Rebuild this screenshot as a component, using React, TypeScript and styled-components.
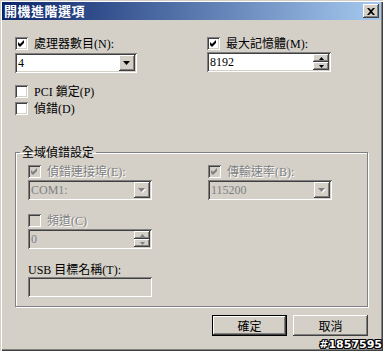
import React from 'react';
import styled, { createGlobalStyle } from 'styled-components';

const GlobalStyle = createGlobalStyle`
  html, body {
    margin: 0;
    padding: 0;
    background: #d4d0c8;
  }
  body {
    font-family: "Liberation Serif", "Noto Sans CJK TC", serif;
    font-size: 12px;
    color: #000;
  }
`;

const raised = `
  box-shadow: inset -1px -1px #404040, inset 1px 1px #fff, inset -2px -2px #808080, inset 2px 2px #d4d0c8;
`;

const sunken = `
  box-shadow: inset 1px 1px #808080, inset -1px -1px #fff, inset 2px 2px #404040, inset -2px -2px #d4d0c8;
`;

const Window = styled.div`
  position: relative;
  width: 383px;
  height: 351px;
  box-sizing: border-box;
  padding: 2px;
  background: #d4d0c8;
  box-shadow: inset 1px 1px #d4d0c8, inset 2px 2px #fff, inset -1px -1px #404040, inset -2px -2px #808080;
  display: flex;
  flex-direction: column;
`;

const TitleBar = styled.div`
  height: 18px;
  display: flex;
  align-items: center;
  justify-content: space-between;
  padding: 0 2px 0 2px;
  background: linear-gradient(to right, #0a246a, #a6caf0);
`;

const TitleText = styled.span`
  color: #fff;
  font-family: "Noto Sans CJK TC", sans-serif;
  font-weight: bold;
  font-size: 13px;
  line-height: 16px;
  letter-spacing: 0.5px;
`;

const CloseButton = styled.div`
  width: 16px;
  height: 14px;
  box-sizing: border-box;
  background: #d4d0c8;
  ${raised}
  display: flex;
  align-items: center;
  justify-content: center;
`;

const Body = styled.div`
  flex: 1;
  display: flex;
  flex-direction: column;
  padding: 15px 13px 0 13px;
`;

const TopGrid = styled.div`
  display: grid;
  grid-template-columns: 192px 124px;
`;

const Column = styled.div`
  display: flex;
  flex-direction: column;
`;

const CheckRow = styled.label<{ $gap?: number }>`
  display: flex;
  align-items: center;
  height: 17px;
  gap: 6px;
  margin-top: ${(p) => p.$gap ?? 0}px;
  white-space: nowrap;
`;

const Label = styled.span<{ $disabled?: boolean }>`
  font-size: 12px;
  line-height: 14px;
  color: ${(p) => (p.$disabled ? '#808080' : '#000')};
  text-shadow: ${(p) => (p.$disabled ? '1px 1px 0 #fff' : 'none')};
`;

const Box = styled.span<{ $disabled?: boolean }>`
  width: 13px;
  height: 13px;
  flex: none;
  box-sizing: border-box;
  padding: 2px;
  background: ${(p) => (p.$disabled ? '#d4d0c8' : '#fff')};
  ${sunken}
  display: flex;
`;

const Field = styled.div<{ $disabled?: boolean; $w: number; $gap?: number }>`
  width: ${(p) => p.$w}px;
  height: 20px;
  box-sizing: border-box;
  padding: 2px;
  margin-top: ${(p) => p.$gap ?? 0}px;
  background: ${(p) => (p.$disabled ? '#d4d0c8' : '#fff')};
  ${sunken}
  display: flex;
  align-items: stretch;
`;

const FieldText = styled.span<{ $disabled?: boolean }>`
  flex: 1;
  padding-left: 1px;
  font-size: 12px;
  line-height: 16px;
  color: ${(p) => (p.$disabled ? '#808080' : '#000')};
`;

const DropButton = styled.div`
  width: 16px;
  background: #d4d0c8;
  ${raised}
  display: flex;
  align-items: center;
  justify-content: center;
`;

const SpinStack = styled.div`
  width: 16px;
  display: flex;
  flex-direction: column;
`;

const SpinHalf = styled.div`
  flex: 1;
  background: #d4d0c8;
  ${raised}
  display: flex;
  align-items: center;
  justify-content: center;
`;

const Group = styled.fieldset`
  margin: 28px 0 0 0;
  padding: 4px 0 9px 12px;
  width: 353px;
  box-sizing: border-box;
  border: 1px solid #808080;
  box-shadow: inset 1px 1px #fff, 1px 1px #fff;
`;

const Legend = styled.legend`
  padding: 0 2px;
  margin-left: -8px;
  font-family: "Noto Sans CJK TC", sans-serif;
  font-size: 12px;
  line-height: 14px;
`;

const GroupGrid = styled.div`
  display: grid;
  grid-template-columns: 180px 124px;
`;

const PlainLabel = styled.div`
  margin-top: 12px;
  height: 16px;
  display: flex;
  align-items: center;
  font-size: 12px;
`;

const Footer = styled.div`
  display: flex;
  justify-content: flex-end;
  gap: 6px;
  margin-top: 8px;
`;

const Button = styled.button<{ $default?: boolean }>`
  width: 75px;
  height: 21px;
  box-sizing: border-box;
  margin: 0;
  padding: 0;
  background: #d4d0c8;
  font-family: "Noto Sans CJK TC", sans-serif;
  font-size: 12px;
  color: #000;
  border: ${(p) => (p.$default ? '1px solid #000' : 'none')};
  ${raised}
`;

const Watermark = styled.div`
  position: absolute;
  right: 1px;
  bottom: 0px;
  font-family: "DejaVu Sans", sans-serif;
  font-weight: bold;
  font-size: 11px;
  line-height: 12px;
  color: #fff;
  text-shadow: -1px 0 #000, 1px 0 #000, 0 -1px #000, 0 1px #000, -1px -1px #000, 1px 1px #000, -1px 1px #000, 1px -1px #000;
`;

const Check = ({ checked, disabled }: { checked?: boolean; disabled?: boolean }) => (
  <Box $disabled={disabled}>
    {checked && (
      <svg width="9" height="9" viewBox="0 0 9 9">
        <polygon points="1,3 3,5 7,1 7,4 3,8 1,6" fill={disabled ? '#808080' : '#000'} />
      </svg>
    )}
  </Box>
);

const DownArrow = ({ disabled }: { disabled?: boolean }) => (
  <svg width="8" height="5" viewBox="0 0 8 5">
    {disabled && <polygon points="1,1 8,1 4.5,5" fill="#fff" />}
    <polygon points="0,0 7,0 3.5,4" fill={disabled ? '#808080' : '#000'} />
  </svg>
);

const Combo = ({ value, w, disabled, gap }: { value: string; w: number; disabled?: boolean; gap?: number }) => (
  <Field $w={w} $disabled={disabled} $gap={gap}>
    <FieldText $disabled={disabled}>{value}</FieldText>
    <DropButton>
      <DownArrow disabled={disabled} />
    </DropButton>
  </Field>
);

const Spinner = ({ value, w, disabled, gap }: { value: string; w: number; disabled?: boolean; gap?: number }) => {
  const fill = disabled ? '#808080' : '#000';
  return (
    <Field $w={w} $disabled={disabled} $gap={gap}>
      <FieldText $disabled={disabled}>{value}</FieldText>
      <SpinStack>
        <SpinHalf>
          <svg width="5" height="3" viewBox="0 0 5 3">
            <polygon points="2.5,0 5,3 0,3" fill={fill} />
          </svg>
        </SpinHalf>
        <SpinHalf>
          <svg width="5" height="3" viewBox="0 0 5 3">
            <polygon points="0,0 5,0 2.5,3" fill={fill} />
          </svg>
        </SpinHalf>
      </SpinStack>
    </Field>
  );
};

const App: React.FC = () => {
  return (
    <>
      <GlobalStyle />
      <Window>
        <TitleBar>
          <TitleText>開機進階選項</TitleText>
          <CloseButton>
            <svg width="8" height="7" viewBox="0 0 8 7">
              <path d="M0 0 L2 0 L4 2 L6 0 L8 0 L5 3.5 L8 7 L6 7 L4 5 L2 7 L0 7 L3 3.5 Z" fill="#000" />
            </svg>
          </CloseButton>
        </TitleBar>

        <Body>
          <TopGrid>
            <Column>
              <CheckRow>
                <Check checked />
                <Label>處理器數目(N):</Label>
              </CheckRow>
              <Combo value="4" w={122} gap={1} />
              <CheckRow $gap={10}>
                <Check />
                <Label>PCI 鎖定(P)</Label>
              </CheckRow>
              <CheckRow>
                <Check />
                <Label>偵錯(D)</Label>
              </CheckRow>
            </Column>
            <Column>
              <CheckRow>
                <Check checked />
                <Label>最大記憶體(M):</Label>
              </CheckRow>
              <Spinner value="8192" w={124} gap={0} />
            </Column>
          </TopGrid>

          <Group>
            <Legend>全域偵錯設定</Legend>
            <GroupGrid>
              <Column>
                <CheckRow>
                  <Check checked disabled />
                  <Label $disabled>偵錯連接埠(E):</Label>
                </CheckRow>
                <Combo value="COM1:" w={124} disabled />
                <CheckRow $gap={12}>
                  <Check disabled />
                  <Label $disabled>頻道(C)</Label>
                </CheckRow>
                <Spinner value="0" w={124} disabled gap={0} />
                <PlainLabel>USB 目標名稱(T):</PlainLabel>
                <Field $w={124} $disabled />
              </Column>
              <Column>
                <CheckRow>
                  <Check checked disabled />
                  <Label $disabled>傳輸速率(B):</Label>
                </CheckRow>
                <Combo value="115200" w={124} disabled />
              </Column>
            </GroupGrid>
          </Group>

          <Footer>
            <Button $default>確定</Button>
            <Button>取消</Button>
          </Footer>
        </Body>
        <Watermark>#1857595</Watermark>
      </Window>
    </>
  );
};

export default App;
